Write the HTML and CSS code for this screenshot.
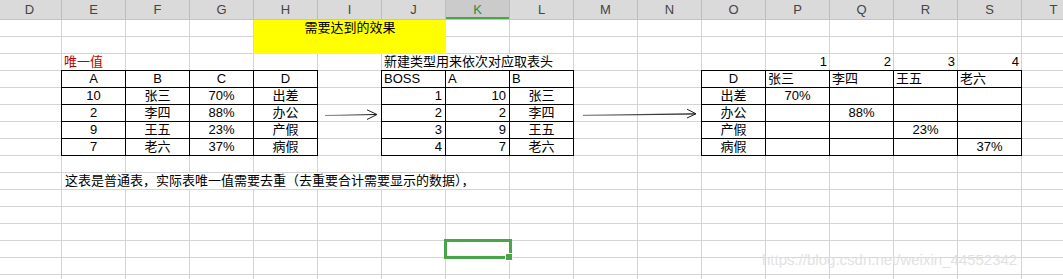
FILE: index.html
```html
<!DOCTYPE html>
<html lang="zh-CN">
<head>
    <meta charset="UTF-8">
    <meta name="viewport" content="width=device-width, initial-scale=1.0">
    <title>需要达到的效果</title>
    <link rel="stylesheet" href="styles.css">
</head>
<body>
    <div class="sheet">
        <div class="col-heads">
            <div class="col-head">D</div>
            <div class="col-head">E</div>
            <div class="col-head">F</div>
            <div class="col-head">G</div>
            <div class="col-head">H</div>
            <div class="col-head">I</div>
            <div class="col-head">J</div>
            <div class="col-head active">K</div>
            <div class="col-head">L</div>
            <div class="col-head">M</div>
            <div class="col-head">N</div>
            <div class="col-head">O</div>
            <div class="col-head">P</div>
            <div class="col-head">Q</div>
            <div class="col-head">R</div>
            <div class="col-head">S</div>
            <div class="col-head">T</div>
        </div>

        <div class="cells">
            <div class="goal">需要达到的效果</div>

            <div class="cell unique">唯一值</div>
            <div class="cell caption">新建类型用来依次对应取表头</div>
            <div class="cell num n1">1</div>
            <div class="cell num n2">2</div>
            <div class="cell num n3">3</div>
            <div class="cell num n4">4</div>

            <!-- source table -->
            <div class="tbl t1">
                <div class="ctr">A</div><div class="ctr">B</div><div class="ctr">C</div><div class="ctr">D</div>
                <div class="ctr">10</div><div class="ctr">张三</div><div class="ctr">70%</div><div class="ctr">出差</div>
                <div class="ctr">2</div><div class="ctr">李四</div><div class="ctr">88%</div><div class="ctr">办公</div>
                <div class="ctr">9</div><div class="ctr">王五</div><div class="ctr">23%</div><div class="ctr">产假</div>
                <div class="ctr">7</div><div class="ctr">老六</div><div class="ctr">37%</div><div class="ctr">病假</div>
            </div>

            <div class="arrow a1">
                <svg viewBox="0 0 64 17" width="64" height="17">
                    <defs>
                        <linearGradient id="g1" x1="0" x2="1" y1="0" y2="0">
                            <stop offset="0" stop-color="#8a8a8a"/>
                            <stop offset="1" stop-color="#111"/>
                        </linearGradient>
                    </defs>
                    <path d="M7 10.5 L58.5 9.5" stroke="url(#g1)" stroke-width="1.2" fill="none"/>
                    <path d="M49 4.8 L59 9.5 L49 14.5" stroke="#222" stroke-width="1" fill="none"/>
                </svg>
            </div>

            <!-- helper table -->
            <div class="tbl t2">
                <div>BOSS</div><div>A</div><div>B</div>
                <div class="rt">1</div><div class="rt">10</div><div class="ctr">张三</div>
                <div class="rt">2</div><div class="rt">2</div><div class="ctr">李四</div>
                <div class="rt">3</div><div class="rt">9</div><div class="ctr">王五</div>
                <div class="rt">4</div><div class="rt">7</div><div class="ctr">老六</div>
            </div>

            <div class="arrow a2">
                <svg viewBox="0 0 128 17" width="128" height="17">
                    <defs>
                        <linearGradient id="g2" x1="0" x2="1" y1="0" y2="0">
                            <stop offset="0" stop-color="#8a8a8a"/>
                            <stop offset="1" stop-color="#111"/>
                        </linearGradient>
                    </defs>
                    <path d="M9 10.3 L121.5 8.8" stroke="url(#g2)" stroke-width="1.2" fill="none"/>
                    <path d="M113 4.2 L122 8.8 L113 13" stroke="#222" stroke-width="1" fill="none"/>
                </svg>
            </div>

            <!-- result table -->
            <div class="tbl t3">
                <div class="ctr">D</div><div>张三</div><div>李四</div><div>王五</div><div>老六</div>
                <div class="ctr">出差</div><div class="ctr">70%</div><div></div><div></div><div></div>
                <div class="ctr">办公</div><div></div><div class="ctr">88%</div><div></div><div></div>
                <div class="ctr">产假</div><div></div><div></div><div class="ctr">23%</div><div></div>
                <div class="ctr">病假</div><div></div><div></div><div></div><div class="ctr">37%</div>
            </div>

            <div class="cell note">这表是普通表，实际表唯一值需要去重（去重要合计需要显示的数据），</div>

            <div class="selected"><span class="handle"></span></div>
        </div>
    </div>

    <div class="watermark">https://blog.csdn.net/weixin_44552342</div>
</body>
</html>
```

FILE: styles.css
```css
body {
    margin: 0;
    overflow: hidden;
    background: #fff;
    font-family: "Liberation Sans", "Noto Sans CJK SC", sans-serif;
    font-size: 13px;
    color: #000;
}
.sheet {
    margin-left: -2px;
    width: 1088px;
}
.col-heads {
    display: flex;
    height: 19px;
    background: #dadada;
    border-bottom: 1px solid #c4c4c4;
}
.col-head {
    flex: none;
    width: 64px;
    box-sizing: border-box;
    border-right: 1px solid #bdbdbd;
    text-align: center;
    line-height: 19px;
    font-size: 13px;
    color: #444;
}
.col-head.active {
    background: #cbcbcb;
    color: #2f8a3a;
    box-shadow: inset 0 -2px 0 #4aa548;
}
.cells {
    display: grid;
    grid-template-columns: repeat(17, 64px);
    grid-template-rows: repeat(16, 17px);
    background-image:
        linear-gradient(to right, transparent 63px, #d4d4d4 63px),
        linear-gradient(to bottom, transparent 16px, #d4d4d4 16px);
    background-size: 64px 17px;
}
.cell {
    line-height: 16px;
    padding: 0 2px;
    white-space: nowrap;
}
.goal {
    grid-column: 5 / 8;
    grid-row: 1 / 3;
    background: #ffff00;
    text-align: center;
    line-height: 16px;
}
.unique {
    grid-column: 2;
    grid-row: 3;
    color: #c00000;
}
.caption {
    grid-column: 7 / 10;
    grid-row: 3;
    background: #fff;
    margin: 0 1px 1px 0;
}
.num {
    grid-row: 3;
    text-align: right;
    padding-right: 3px;
}
.n1 { grid-column: 13; }
.n2 { grid-column: 14; }
.n3 { grid-column: 15; }
.n4 { grid-column: 16; }

.tbl {
    display: grid;
    grid-auto-rows: 17px;
    grid-row: 4 / 9;
    margin: -1px 0 0 -1px;
    border-top: 1px solid #000;
    border-left: 1px solid #000;
    background: #fff;
}
.tbl > div {
    box-sizing: border-box;
    border-right: 1px solid #000;
    border-bottom: 1px solid #000;
    line-height: 16px;
    padding: 0 2px;
    white-space: nowrap;
}
.tbl .ctr { text-align: center; }
.tbl .rt { text-align: right; padding-right: 3px; }
.t1 {
    grid-column: 2 / 6;
    grid-template-columns: repeat(4, 64px);
}
.t2 {
    grid-column: 7 / 10;
    grid-template-columns: repeat(3, 64px);
}
.t3 {
    grid-column: 12 / 17;
    grid-template-columns: repeat(5, 64px);
}
.arrow {
    grid-row: 6;
}
.arrow svg {
    display: block;
}
.a1 { grid-column: 6; }
.a2 { grid-column: 10 / 12; }

.note {
    grid-column: 2 / 9;
    grid-row: 10;
    background: #fff;
    margin: 0 1px 1px 0;
    padding-left: 3px;
}
.selected {
    grid-column: 8;
    grid-row: 14;
    margin: -2px -2px -1px -2px;
    border: 3px solid #4aa548;
    position: relative;
}
.handle {
    position: absolute;
    right: -4px;
    bottom: -5px;
    width: 6px;
    height: 6px;
    background: #4aa548;
    border: 1px solid #fff;
}
.watermark {
    position: absolute;
    left: 762px;
    top: 251px;
    font-size: 15px;
    line-height: 17px;
    color: #e2e2e2;
    white-space: nowrap;
}
```
